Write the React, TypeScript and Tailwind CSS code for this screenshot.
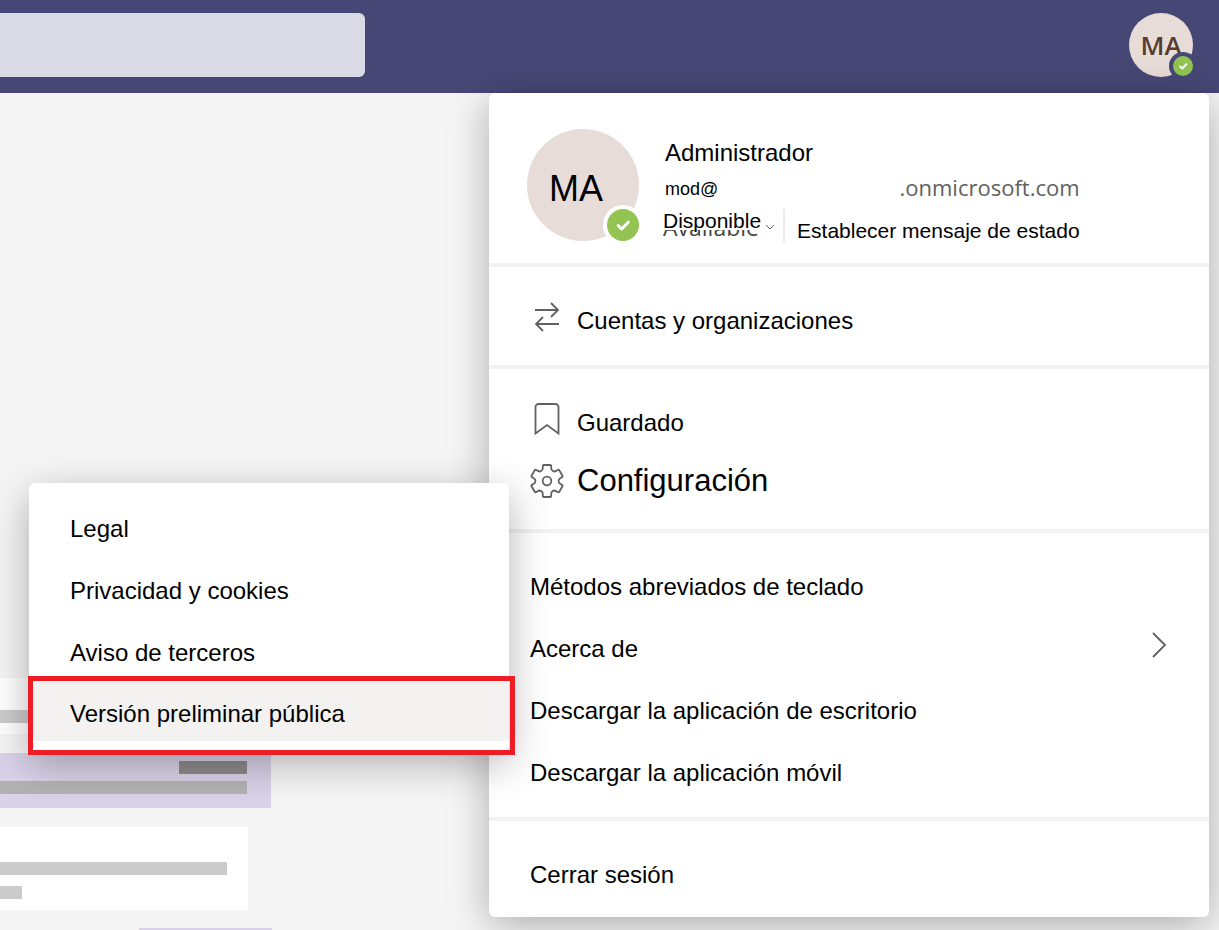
import React from "react";

const SANS = "font-['Liberation_Sans',Arial,sans-serif]";
const SEGOE = "font-['Open_Sans','Noto_Sans',sans-serif]";

function CheckMark({ className }: { className: string }) {
  return (
    <svg viewBox="0 0 32 32" className={className} fill="none" aria-hidden="true">
      <path d="M11.2 16.6l3.5 3.4 6.6-6.8" stroke="#fff" strokeWidth="3" strokeLinecap="round" strokeLinejoin="round" />
    </svg>
  );
}

function SwapIcon() {
  return (
    <svg viewBox="0 0 36 36" className="size-9 shrink-0" fill="none" stroke="#616161" strokeWidth="1.8" aria-hidden="true">
      <path d="M6 11h23M22 4l7 7-7 7M30 25H7M14 18l-7 7 7 7" />
    </svg>
  );
}

function BookmarkIcon() {
  return (
    <svg viewBox="0 0 36 36" className="size-9 shrink-0" fill="none" stroke="#616161" strokeWidth="1.8" aria-hidden="true">
      <path d="M6.500 32.500V6a3 3 0 0 1 3-3h17a3 3 0 0 1 3 3v26.500L18 24z" />
    </svg>
  );
}

/* Point at a given angle (degrees, clockwise from the top) round the middle of the gear. */
function polar(angle: number, radius: number) {
  const a = ((angle - 90) * Math.PI) / 180;
  return `${(18 + radius * Math.cos(a)).toFixed(2)} ${(18 + radius * Math.sin(a)).toFixed(2)}`;
}

const GEAR_PATH =
  [0, 60, 120, 180, 240, 300]
    .map(
      (a, i) =>
        `${i === 0 ? "M" : "L"}${polar(a - 11, 16.3)}L${polar(a + 11, 16.3)}` +
        `Q${polar(a + 15, 16.5)} ${polar(a + 16, 15.2)}L${polar(a + 18, 13.6)}` +
        `Q${polar(a + 22, 11.4)} ${polar(a + 30, 11.6)}` +
        `Q${polar(a + 38, 11.4)} ${polar(a + 42, 13.6)}L${polar(a + 44, 15.2)}` +
        `Q${polar(a + 45, 16.5)} ${polar(a + 49, 16.3)}`,
    )
    .join("") + "Z";

function GearIcon() {
  return (
    <svg viewBox="0 0 36 36" className="size-9 shrink-0" fill="none" stroke="#616161" strokeWidth="1.8" strokeLinejoin="round" aria-hidden="true">
      <path d={GEAR_PATH} />
      <circle cx="18" cy="18" r="4.3" />
    </svg>
  );
}

function TopBar() {
  return (
    <header className="flex h-[93px] items-start justify-between bg-[#464775] pt-[13px] pr-[26px]">
      <input
        type="search"
        aria-label="Buscar"
        className="h-16 w-[365px] rounded-r-md bg-[#dadae4] px-4 text-2xl outline-none"
      />
      <button type="button" aria-label="MA, Disponible" className="relative size-16 rounded-full bg-[#e8dcd9]">
        <span className={`${SEGOE} text-[26px] leading-8 font-semibold text-[#573c2f]`}>MA</span>
        <span className="absolute right-0 bottom-px size-5 rounded-full bg-[#92c353] ring-4 ring-[#464775]">
          <CheckMark className="size-5" />
        </span>
      </button>
    </header>
  );
}

function ChatBackdrop() {
  return (
    <main className="flex flex-col pt-[585px]" aria-hidden="true">
      <div className="h-14 w-[248px] bg-white pt-8">
        <div className="h-[13px] w-[227px] bg-[#cbcbcb]" />
      </div>
      <div className="mt-[19px] flex h-[55px] w-[271px] flex-col gap-[7px] bg-[#d9d2e8] pt-2 pr-6">
        <div className="h-[13px] w-[68px] self-end bg-[#8b8b8b]" />
        <div className="h-[13px] bg-[#b2b2b2]" />
      </div>
      <div className="mt-[19px] flex h-[83px] w-[248px] flex-col gap-[11px] bg-white pt-[35px]">
        <div className="h-[13px] w-[227px] bg-[#cbcbcb]" />
        <div className="h-[13px] w-[22px] bg-[#cbcbcb]" />
      </div>
      <div className="mt-[18px] ml-[139px] h-14 w-[133px] bg-[#d9d2e8]" />
    </main>
  );
}

function Profile() {
  return (
    <section className="flex h-[174px] gap-[26px] pt-9 pl-[38px]">
      <div className="relative flex size-28 shrink-0 items-center rounded-full bg-[#e8dcd9] pt-2 pl-[22px]">
        <span className="text-4xl">MA</span>
        <span className="absolute right-0 bottom-0 size-8 rounded-full bg-[#92c353] ring-4 ring-white">
          <CheckMark className="size-8" />
        </span>
      </div>
      <div className="flex flex-col pt-2.5">
        <h1 className="text-2xl leading-7">Administrador</h1>
        <p className="flex h-9 items-center justify-between pt-1">
          <span className="pt-1 text-lg">mod@</span>
          <span className={`${SEGOE} text-[22px] text-[#616161]`}>.onmicrosoft.com</span>
        </p>
        <div className="mt-1.5 flex h-10 items-start">
          <button type="button" className="flex items-start gap-1 text-[21px] leading-6">
            <span className="relative -ml-0.5">
              <span aria-hidden="true" className={`${SEGOE} absolute top-1.5 left-0 text-[23px] text-[#484644]`}>
                Available
              </span>
              <span className="relative block h-[21px] bg-white">Disponible</span>
            </span>
            <svg viewBox="0 0 10 8" className="mt-3.5 h-2 w-2.5" fill="none" stroke="#616161" aria-hidden="true">
              <path d="M1 2l4 4 4-4" />
            </svg>
          </button>
          <button type="button" className="ml-2 flex h-[34px] items-end border-l-2 border-[#edebe9] pl-3 text-[21px] leading-6">
            Establecer mensaje de estado
          </button>
        </div>
      </div>
    </section>
  );
}

function PlainItem({ label }: { label: string }) {
  return (
    <li>
      <button type="button" className="flex h-[62px] w-full items-center pl-[41px] text-left text-2xl">
        {label}
      </button>
    </li>
  );
}

function AboutSubmenu() {
  const item = "flex w-full items-center pt-1.5 pl-[41px] text-left text-2xl";
  return (
    <ul className="absolute top-[390px] -left-[460px] w-[480px] rounded-md bg-white pt-3 pb-2.5 shadow-[0_12px_40px_rgba(0,0,0,0.3)]">
      <li><button type="button" className={`${item} h-[62px]`}>Legal</button></li>
      <li><button type="button" className={`${item} h-[62px]`}>Privacidad y cookies</button></li>
      <li><button type="button" className={`${item} h-[62px]`}>Aviso de terceros</button></li>
      <li className="relative">
        <button type="button" className={`${item} h-[60px] bg-[#f3f2f1]`}>Versión preliminar pública</button>
        <span className="pointer-events-none absolute -top-[5px] -right-1.5 -bottom-3.5 -left-px border-[5px] border-[#ee1c24]" />
      </li>
    </ul>
  );
}

function AccountMenu() {
  return (
    <div className="absolute top-[93px] right-2.5 w-[720px] rounded-md bg-white shadow-[0_8px_40px_rgba(0,0,0,0.3)]">
      <nav className="divide-y-4 divide-[#f3f2f1]" aria-label="Cuenta">
        <Profile />
        <section className="h-[102px] pt-[19px]">
          <button type="button" className="flex h-[62px] w-full items-center gap-3 pl-10 text-left text-2xl">
            <SwapIcon />
            <span className="pt-2">Cuentas y organizaciones</span>
          </button>
        </section>
        <section className="h-[164px] pt-[19px]">
          <button type="button" className="flex h-[62px] w-full items-center gap-3 pl-10 text-left text-2xl">
            <BookmarkIcon />
            <span className="pt-2">Guardado</span>
          </button>
          <button type="button" className="flex h-[62px] w-full items-center gap-3 pl-10 text-left text-[31px]">
            <GearIcon />
            <span>Configuración</span>
          </button>
        </section>
        <ul className="h-[288px] pt-[23px]">
          <PlainItem label="Métodos abreviados de teclado" />
          <li>
            <button type="button" className="flex h-[62px] w-full items-center justify-between pr-[42px] pl-[41px] text-left text-2xl">
              Acerca de
              <svg viewBox="0 0 16 28" className="mb-2 h-7 w-4" fill="none" stroke="#616161" strokeWidth="1.8" aria-hidden="true">
                <path d="M2 2l12 12L2 26" />
              </svg>
            </button>
          </li>
          <PlainItem label="Descargar la aplicación de escritorio" />
          <PlainItem label="Descargar la aplicación móvil" />
        </ul>
        <ul className="h-24 pt-[23px]">
          <PlainItem label="Cerrar sesión" />
        </ul>
      </nav>
      <AboutSubmenu />
    </div>
  );
}

export default function App() {
  return (
    <div className={`${SANS} relative h-screen overflow-hidden bg-[#f5f5f5] text-black`}>
      <TopBar />
      <ChatBackdrop />
      <AccountMenu />
    </div>
  );
}
